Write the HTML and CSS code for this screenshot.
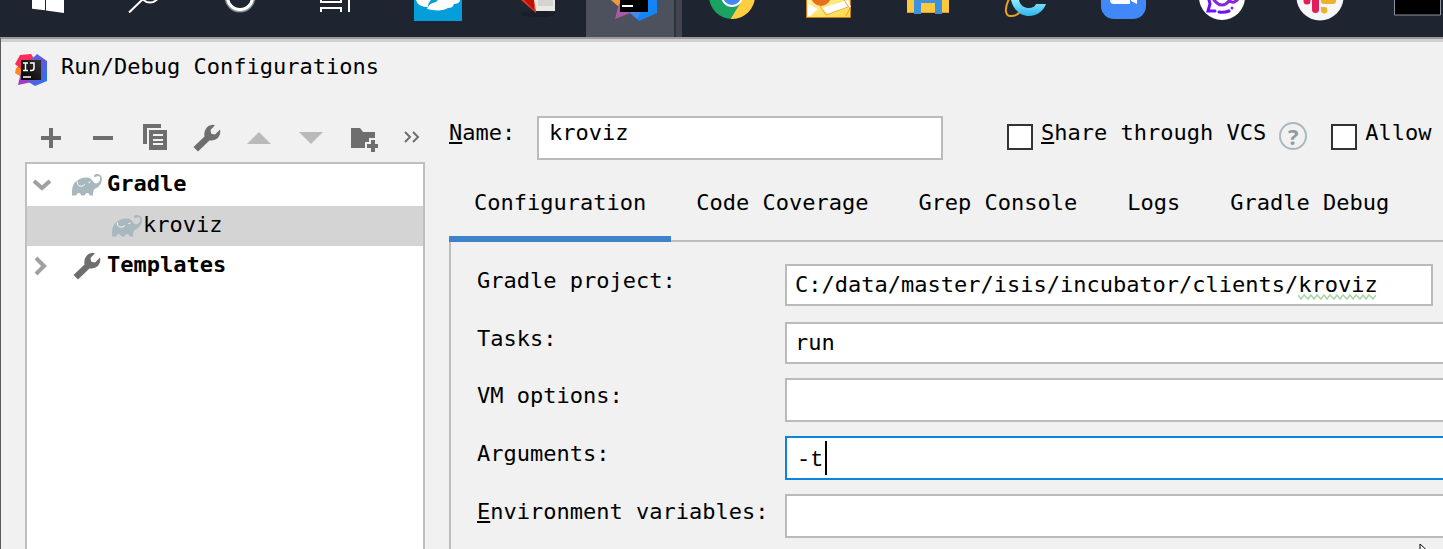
FILE: index.html
```html
<!DOCTYPE html>
<html lang="en">
<head>
<meta charset="utf-8">
<title>Run/Debug Configurations</title>
<link rel="stylesheet" href="styles.css">
</head>
<body>
<svg class="defs" aria-hidden="true">
  <defs>
    <linearGradient id="ij-blue" x1="0" y1="0" x2="1" y2="1"><stop offset="0" stop-color="#4a6fe0"/><stop offset=".5" stop-color="#5f58dc"/><stop offset="1" stop-color="#1f7df0"/></linearGradient>
    <linearGradient id="ij-dark" x1="0" y1="1" x2="1" y2="0"><stop offset="0" stop-color="#000"/><stop offset="1" stop-color="#333"/></linearGradient>
    <linearGradient id="mail" x1="0" y1="0" x2="1" y2="1"><stop offset="0" stop-color="#fff3b0"/><stop offset="1" stop-color="#ffd93b"/></linearGradient>
    <linearGradient id="ie" x1="0" y1="0" x2="0" y2="1"><stop offset="0" stop-color="#8deaff"/><stop offset="1" stop-color="#2fb4e8"/></linearGradient>
    <clipPath id="chrome-disc"><circle cx="48" cy="-4" r="23"/></clipPath>
    <symbol id="wrench" viewBox="0 0 28 28">
      <path fill="#6e6e6e" d="M0.5 23 L11.5 12.5 C10.5 7 13.5 1.5 19.5 .8 L22 1.2 L17.5 6 L18.3 9.8 L22 10.6 L27 5.5 C28.5 11.5 24 17.5 16.5 16.5 L5 27.5 Z"/>
    </symbol>
    <symbol id="elephant" viewBox="0 0 30 22">
      <path fill="#a9b7bf" d="M0 21.5 C-.3 14 1 8.500 5.500 6.500 C9 3 16 2.800 18.500 4.500 C20.500 6 22 9.800 24.500 9.500 C27.800 8.800 29 4.500 27.600 2.600 C26 1 24.500 3.200 22.400 3 C21 2.500 22 .3 25 0 C29 -.2 30.700 3.500 29.600 7.500 C28.200 12 25.500 14 23.400 14.500 C21.500 15.500 21 17.500 21 21.500 H17.800 C17.200 18 13.200 18 12.700 21.500 H9.300 C8.700 18 5 18 4.200 21.500 Z"/>
      <path fill="none" stroke="#fff" stroke-width="1" d="M5.300 7.500 C5 12.500 9 13.500 13 10.500 M18.500 7.500 C18 9 16.500 8.700 16.300 8"/>
    </symbol>
  </defs>
</svg>

<nav class="taskbar" aria-label="Taskbar">
  <button class="task task-start" aria-label="Start"><svg width="96" height="37"><path fill="#fff" d="M32 0H45V10.3L32 8.7ZM46 0H64V13L46 10.5Z"/></svg></button>
  <button class="task" aria-label="Search"><svg width="98" height="37"><g fill="none" stroke="#fff" stroke-width="2"><path d="M33 12.5 47-1"/><circle cx="54" cy="-7" r="9.5"/></g></svg></button>
  <button class="task" aria-label="Cortana"><svg width="98" height="37"><circle cx="46" cy="-3" r="13.5" fill="none" stroke="#8d9098" stroke-width="4"/><circle cx="46" cy="-3" r="12.5" fill="none" stroke="#fff" stroke-width="3"/></svg></button>
  <button class="task" aria-label="Task view"><svg width="98" height="37"><path fill="none" stroke="#fff" stroke-width="2" d="M29 0V2H49V0M29 12V7M49 7V12M28 8H50M57 0V12"/></svg></button>
  <button class="task" aria-label="Cloud notes"><svg width="98" height="37"><path fill="#049edb" d="M24 0H72V21H24Z"/><path fill="#fff" d="M26 0C28 6 33 7 38 7C38 4 39 2 41 0ZM37 9C39 4 42 3 46 2L48 0H70C70 3 66 4 64 4C63 7 61 8 58 8C54 11 45 11 37 9Z"/></svg></button>
  <button class="task" aria-label="Reader"><svg width="98" height="37"><ellipse cx="50" cy="14" rx="17" ry="3" fill="#191d27"/><path fill="#e8392b" d="M33 0H48V13Z"/><path fill="#bd1206" d="M36 0H46V9L48 12Z"/><path fill="#e9e9e4" d="M46 0H67V11H48Z"/><path stroke="#bdbdbd" stroke-width="1" d="M50 1H65M50 3H65M50 5H65"/></svg></button>
  <button class="task task-active" aria-label="IntelliJ IDEA"><svg width="96" height="37"><path fill="#f49a32" d="M25 0H34V8Z"/><path fill="#a95aa5" d="M33 3 29 19 47 12 36 8Z"/><path fill="#1485f7" d="M60 0H71V13L53 21 43 12Z"/><path fill="#4c86e4" d="M43 12H55L51 19Z"/><path d="M34 0H62V12H34Z"/><path fill="#fff" d="M36 5H47V7H36Z"/></svg></button>
  <button class="task" aria-label="Chrome"><svg width="98" height="37"><g clip-path="url(#chrome-disc)"><path fill="#1ba260" d="M20 0H60V22H20Z"/><path fill="#ffcd40" d="M46 20 57 2 60-5H80V25H46Z"/></g><circle cx="48" cy="-4" r="11" fill="#fff"/><circle cx="48" cy="-4" r="9" fill="#4587f3"/></svg></button>
  <button class="task" aria-label="Outlook"><svg width="98" height="37"><path fill="url(#mail)" stroke="#c77a1a" stroke-width="1" d="M24.500-1H68.500V17.500H24.500Z"/><path fill="#fff" d="M26 4 36 9 28 16H26ZM40 8 66 0 69 7 46 14Z"/><path fill="none" stroke="#e8a83a" d="M38 6 44 15 66 7M62 0 68 9M64 16 68 8"/><circle cx="39" cy="-4" r="10" fill="#e8701a"/></svg></button>
  <button class="task" aria-label="File Explorer"><svg width="98" height="37"><rect x="27" y="-4" width="42" height="17" rx="1" fill="#fcc93c"/><path fill="#3c92dc" d="M34 0H62V14H55V3H41V14H34Z"/><path fill="#e0a422" d="M27 12H34V13H27ZM41 12H55V13H41ZM62 12H69V13H62Z"/></svg></button>
  <button class="task" aria-label="Internet Explorer"><svg width="98" height="37"><path fill="none" stroke="#eaa21b" stroke-width="2" d="M31-1C26 9 27 17 34 16C37 16 40 14 42 12"/><path fill="url(#ie)" d="M33 0H41C43 10 56 10 58 4H68C65 12 58 16 51 16C42 16 35 9 33 0Z"/></svg></button>
  <button class="task" aria-label="Zoom"><svg width="98" height="37"><rect x="25" y="-26" width="45" height="45" rx="13" fill="#4189fb"/><path fill="#fff" d="M34 0H54V4H38Q34 4 34 0ZM55 0H61V4L55 1Z"/></svg></button>
  <button class="task" aria-label="Chat"><svg width="98" height="37"><circle cx="48" cy="-3" r="23" fill="#fff"/><g fill="none" stroke="#6c13f5" stroke-width="3" stroke-linecap="round"><path d="M35 0 36 4 34 11 41 11M45 12Q50 13 55 11"/><path d="M40 0Q48 10 56 0M55 0Q58 4 62 1 64 0 64-2" stroke="#8627dc"/></g><circle cx="58" cy="8" r="1.500" fill="#8627dc"/></svg></button>
  <button class="task" aria-label="Slack"><svg width="98" height="37"><circle cx="48" cy="-3" r="23.500" fill="#f6f6f6"/><circle cx="35" cy="1" r="3.500" fill="#e01e5a"/><rect x="40" y="-8" width="7" height="21" rx="3.500" fill="#e01e5a"/><rect x="49" y="-3" width="15" height="7" rx="3" fill="#ecb22e"/><path fill="#ecb22e" d="M49 7H52A3.200 3.200 0 1 1 49 10Z"/></svg></button>
  <button class="task" aria-label="Command Prompt"><svg width="98" height="37"><path fill="#000" stroke="#8b949c" d="M24.500-2H70.500V15H24.500Z"/></svg></button>
</nav>

<main class="dialog">
  <header class="titlebar">
    <svg width="32" height="32" viewBox="0 0 32 32" aria-hidden="true">
      <path fill="#fd8a1f" d="M1 14 8 10V24L0 19Z"/><path fill="#fe2c58" d="M5 1 16 0 20 6 8 17 0 10Z"/><path fill="#a63ac4" d="M6 18 3 31 17 28 22 20Z"/><path fill="url(#ij-blue)" d="M22 0 32 7V27L20 32 12 27 17 5Z"/>
      <path fill="url(#ij-dark)" d="M6 6H26V26H6Z"/><path fill="none" stroke="#fff" stroke-width="1.500" d="M8 9H13M10.500 9V16.500M8 16.500H13M15 9H19V14Q19 16.500 16.500 16.500H15M8 23H16"/>
    </svg>
    <h1 class="title">Run/Debug Configurations</h1>
  </header>

  <div class="content">
    <aside class="sidebar">
      <div class="toolbar">
        <button class="tool" aria-label="Add"><svg width="28" height="28"><path fill="#6e6e6e" d="M12 4H16V12H24V16H16V24H12V16H4V12H12Z"/></svg></button>
        <button class="tool" aria-label="Remove"><svg width="28" height="28"><path fill="#6e6e6e" d="M4 12H24V16H4Z"/></svg></button>
        <button class="tool" aria-label="Copy"><svg width="28" height="28"><path fill="#6e6e6e" d="M2 0H20V4H6V20H2Z"/><path fill="#6e6e6e" fill-rule="evenodd" d="M8 6H26V26H8ZM12 10V12H22V10ZM12 15V17H22V15ZM12 19V21H22V19Z"/></svg></button>
        <button class="tool" aria-label="Edit templates"><svg width="28" height="28"><use href="#wrench"/></svg></button>
        <button class="tool" aria-label="Move up"><svg width="28" height="28"><path fill="#bababa" d="M2 20 14 8 26 20Z"/></svg></button>
        <button class="tool" aria-label="Move down"><svg width="28" height="28"><path fill="#bababa" d="M2 8H26L14 20Z"/></svg></button>
        <button class="tool" aria-label="New folder"><svg width="30" height="28"><path fill="#6e6e6e" d="M3 4H12L15 8H27V14H21V18H17V24H3Z"/><path fill="#6e6e6e" d="M23 16H27V20H30V24H27V28H23V24H19V20H23Z"/></svg></button>
        <button class="tool tool-more" aria-label="More"><svg width="16" height="28"><path fill="none" stroke="#6e6e6e" stroke-width="2" d="M1 8 6 13 1 18M9 8 14 13 9 18"/></svg></button>
      </div>
      <ul class="tree">
        <li class="node node-first"><svg width="20" height="18"><path fill="none" stroke="#a0a0a0" stroke-width="4" d="M2 5 10 12 18 5"/></svg><svg class="node-icon" width="30" height="22"><use href="#elephant"/></svg><b>Gradle</b></li>
        <li class="node node-child"><svg width="30" height="22"><use href="#elephant"/></svg><span>kroviz</span></li>
        <li class="node"><svg width="20" height="20"><path fill="none" stroke="#a0a0a0" stroke-width="4" d="M4 2 12 10 4 18"/></svg><svg class="node-icon" width="30" height="28"><use href="#wrench"/></svg><b>Templates</b></li>
      </ul>
    </aside>

    <section class="editor">
      <div class="name-row">
        <label class="name-label" for="name"><u>N</u>ame:</label>
        <input class="field name-field" id="name" type="text" value="kroviz">
        <div class="option option-share"><input class="check" id="share" type="checkbox"><label for="share"><u>S</u>hare through VCS</label></div>
        <button class="help" aria-label="Help">?</button>
        <div class="option"><input class="check" id="allow" type="checkbox"><label for="allow">Allow</label></div>
      </div>
      <div class="tabs" role="tablist">
        <button class="tab tab-selected" role="tab" aria-selected="true">Configuration</button>
        <button class="tab" role="tab">Code Coverage</button>
        <button class="tab" role="tab">Grep Console</button>
        <button class="tab" role="tab">Logs</button>
        <button class="tab" role="tab">Gradle Debug</button>
      </div>
      <form class="panel">
        <div class="form-row form-row-project">
          <label for="project">Gradle project:</label>
          <div class="project-box">
            <input class="field" id="project" type="text" spellcheck="false" value="C:/data/master/isis/incubator/clients/kroviz">
            <svg class="squiggle" width="78" height="6"><path fill="none" stroke="#a9d3a5" stroke-width="1.500" d="M0 1 3 5 6 1 10 5 13 1 16 5 19 1 23 5 26 1 29 5 32 1 36 5 39 1 42 5 45 1 49 5 52 1 55 5 58 1 62 5 65 1 68 5 71 1 75 5 78 1"/></svg>
          </div>
        </div>
        <div class="form-row">
          <label for="tasks">Tasks:</label>
          <input class="field field-open" id="tasks" type="text" value="run">
        </div>
        <div class="form-row">
          <label for="vm">VM options:</label>
          <input class="field field-open field-tall" id="vm" type="text">
        </div>
        <div class="form-row">
          <label for="args">Arguments:</label>
          <div class="field field-open field-tall field-focus"><input class="args-input" id="args" type="text" value="-t"><span class="caret"></span></div>
        </div>
        <div class="form-row">
          <label for="env"><u>E</u>nvironment variables:</label>
          <input class="field field-open field-tall" id="env" type="text">
        </div>
      </form>
    </section>
  </div>
  <svg class="pointer" width="14" height="20" aria-hidden="true"><path fill="#fff" stroke="#000" d="M1 1V17L5 13 8 19 10 18 8 12H13Z"/></svg>
</main>
</body>
</html>
```

FILE: styles.css
```css
* { box-sizing: border-box; }

body {
  margin: 0;
  height: 100vh;
  display: flex;
  flex-direction: column;
  overflow: hidden;
  background: #f1f1f1;
  color: #000;
  font: 22px/26px "DejaVu Sans Mono", monospace;
}

button, input { font: inherit; color: inherit; }
button { border: 0; padding: 0; background: none; }
svg { display: block; flex: none; }
u { text-decoration-thickness: 2px; text-underline-offset: 2px; }
.defs { position: absolute; width: 0; height: 0; }

.taskbar {
  display: flex;
  flex: none;
  height: 37px;
  overflow: hidden;
  background: #1f2431;
}
.task { flex: none; width: 98px; height: 37px; }
.task-start { width: 96px; }
.task-active {
  background: linear-gradient(to right, #4d515d 88px, #2e323b 88px, #2e323b 90px, #42454f 90px, #42454f 96px, transparent 96px);
}

.dialog {
  position: relative;
  flex: 1;
  min-height: 0;
  display: flex;
  flex-direction: column;
  border-top: 2px solid #9b9b9b;
  border-left: 1px solid #5c5c5c;
  box-shadow: inset 0 3px #d0d0d0;
  padding-left: 24px;
  overflow: hidden;
}
.titlebar {
  display: flex;
  gap: 14px;
  margin: 15px 0 30px -10px;
}
.title { margin: 0; font: inherit; }

.content {
  flex: 1;
  min-height: 0;
  display: flex;
  gap: 24px;
}

.sidebar {
  flex: none;
  width: 400px;
  display: flex;
  flex-direction: column;
  gap: 2px;
}
.toolbar { display: flex; height: 44px; }
.tool {
  flex: none;
  width: 52px;
  display: flex;
  justify-content: center;
  align-items: center;
}
.tool-more { width: 46px; }

.tree {
  flex: 1;
  margin: 0;
  padding: 0;
  list-style: none;
  background: #fff;
  border: 2px solid #bfbfbf;
  border-bottom: 0;
}
.node {
  display: flex;
  align-items: center;
  height: 40px;
  padding-left: 5px;
}
.node-first { height: 42px; }
.node-icon { margin: 0 5px 0 20px; }
.node b, .node span { padding-bottom: 2px; }
.node-child { padding-left: 85px; gap: 1px; background: #d4d4d4; }

.editor {
  flex: 1;
  min-width: 0;
  display: flex;
  flex-direction: column;
}
.name-row {
  display: flex;
  height: 44px;
  line-height: 34px;
  white-space: nowrap;
}
.name-label { flex: none; width: 88px; }
.field {
  width: 100%;
  height: 42px;
  padding: 0 8px 2px;
  border: 2px solid #bababa;
  border-radius: 0;
  background: #fff;
  outline: 0;
}
.name-field {
  flex: none;
  width: 406px;
  height: 44px;
  padding: 0 10px 12px;
}
.option { display: flex; gap: 8px; }
.option-share { margin-left: 64px; }
.check {
  appearance: none;
  flex: none;
  width: 26px;
  height: 26px;
  margin: 8px 0 0;
  border: 2px solid #333;
  background: #fff;
}
.help {
  flex: none;
  width: 28px;
  height: 28px;
  margin: 6px 24px 0 13px;
  border: 2px solid #adb8c0;
  border-radius: 50%;
  color: #8f9aa2;
  font: bold 22px/24px "Open Sans", sans-serif;
}

.tabs {
  display: flex;
  margin-top: 10px;
  box-shadow: inset 0 -2px #bdbdbd;
}
.tab {
  padding: 20px 25px;
  border-bottom: 6px solid transparent;
  white-space: nowrap;
}
.tab-selected { border-color: #3f82c9; }

.panel {
  flex: 1;
  display: flex;
  flex-direction: column;
  gap: 14px;
  padding: 22px 0 0 26px;
  border-left: 2px solid #bdbdbd;
}
.form-row {
  display: grid;
  grid-template-columns: 308px minmax(0, 1fr);
  align-items: center;
}
.form-row label { padding-bottom: 8px; white-space: nowrap; }
.form-row-project { padding-right: 10px; margin-bottom: 2px; }
.project-box { position: relative; }
.squiggle { position: absolute; bottom: 6px; left: calc(10px + 38ch); }
.field-open { border-right: 0; }
.field-tall { height: 44px; }
.field-focus {
  display: flex;
  align-items: center;
  padding: 0 0 0 10px;
  border-color: #0a84df;
}
.args-input {
  width: 28px;
  height: 34px;
  padding: 4px 0 0;
  border: 0;
  background: none;
  outline: 0;
  font-family: "Liberation Mono", monospace;
}
.caret { width: 2px; height: 34px; background: #000; }

.pointer { position: absolute; top: 504px; right: 10px; }
```
